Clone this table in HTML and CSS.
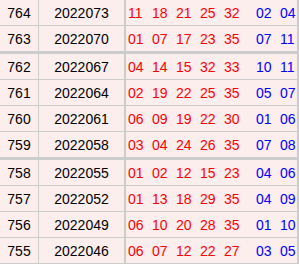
FILE: index.html
```html
<!DOCTYPE html>
<html>
<head>
<meta charset="utf-8">
<link rel="stylesheet" href="styles.css">
</head>
<body>
<table class="draws">
  <tr><td class="no">764</td><td class="issue">2022073</td><td class="balls"><span class="red"><i>11</i><i>18</i><i>21</i><i>25</i><i>32</i></span><span class="blue"><i>02</i><i>04</i></span></td></tr>
  <tr class="sep"><td class="no">763</td><td class="issue">2022070</td><td class="balls"><span class="red"><i>01</i><i>07</i><i>17</i><i>23</i><i>35</i></span><span class="blue"><i>07</i><i>11</i></span></td></tr>
  <tr><td class="no">762</td><td class="issue">2022067</td><td class="balls"><span class="red"><i>04</i><i>14</i><i>15</i><i>32</i><i>33</i></span><span class="blue"><i>10</i><i>11</i></span></td></tr>
  <tr><td class="no">761</td><td class="issue">2022064</td><td class="balls"><span class="red"><i>02</i><i>19</i><i>22</i><i>25</i><i>35</i></span><span class="blue"><i>05</i><i>07</i></span></td></tr>
  <tr><td class="no">760</td><td class="issue">2022061</td><td class="balls"><span class="red"><i>06</i><i>09</i><i>19</i><i>22</i><i>30</i></span><span class="blue"><i>01</i><i>06</i></span></td></tr>
  <tr class="sep"><td class="no">759</td><td class="issue">2022058</td><td class="balls"><span class="red"><i>03</i><i>04</i><i>24</i><i>26</i><i>35</i></span><span class="blue"><i>07</i><i>08</i></span></td></tr>
  <tr><td class="no">758</td><td class="issue">2022055</td><td class="balls"><span class="red"><i>01</i><i>02</i><i>12</i><i>15</i><i>23</i></span><span class="blue"><i>04</i><i>06</i></span></td></tr>
  <tr><td class="no">757</td><td class="issue">2022052</td><td class="balls"><span class="red"><i>01</i><i>13</i><i>18</i><i>29</i><i>35</i></span><span class="blue"><i>04</i><i>09</i></span></td></tr>
  <tr><td class="no">756</td><td class="issue">2022049</td><td class="balls"><span class="red"><i>06</i><i>10</i><i>20</i><i>28</i><i>35</i></span><span class="blue"><i>01</i><i>10</i></span></td></tr>
  <tr class="sep"><td class="no">755</td><td class="issue">2022046</td><td class="balls"><span class="red"><i>06</i><i>07</i><i>12</i><i>22</i><i>27</i></span><span class="blue"><i>03</i><i>05</i></span></td></tr>
</table>
</body>
</html>
```
FILE: styles.css
```css
html, body {
  margin: 0;
  padding: 0;
  background: #ffffff;
}
.draws {
  border-collapse: separate;
  border-spacing: 0;
  table-layout: fixed;
  font-family: "Liberation Sans", Arial, sans-serif;
  font-size: 14px;
}
.draws td {
  padding: 2px 0 0 0;
  line-height: 23px;
  background: #fdeeee;
  border-bottom: 1px solid #cccccc;
  white-space: nowrap;
  color: #000000;
}
.draws tr.sep td {
  border-bottom-width: 3px;
}
.no {
  width: 38px;
  text-align: center;
  border-right: 1px solid #cccccc;
}
.issue {
  width: 85px;
  text-align: center;
  border-right: 2px solid #cccccc;
}
.draws td.balls {
  width: 169px;
  padding-left: 2px;
  border-right: 2px solid #cccccc;
}
.balls i {
  font-style: normal;
  display: inline-block;
  width: 14px;
  margin-right: 10px;
}
.balls i:last-child {
  margin-right: 0;
}
.red {
  color: #ff0000;
}
.blue {
  color: #0000ff;
  margin-left: 18px;
}
```
